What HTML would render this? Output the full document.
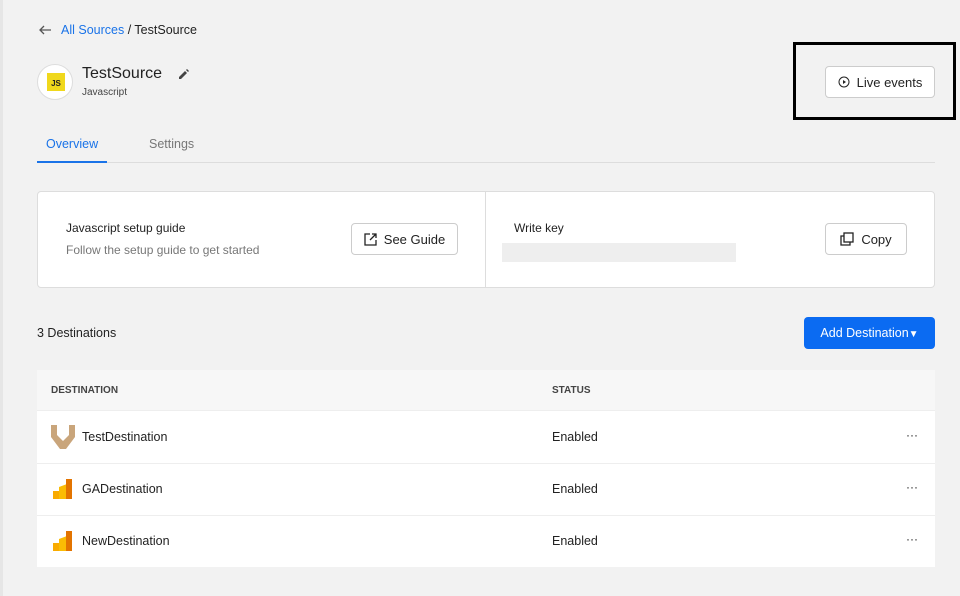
<!DOCTYPE html>
<html><head><style>
*{box-sizing:border-box;margin:0;padding:0}
body{width:960px;height:596px;background:#f2f2f2;font-family:"Liberation Sans",sans-serif;color:#222;position:relative;overflow:hidden;font-size:13px}
.a{position:absolute}
.btn{position:absolute;background:#fff;border:1px solid #ccc;border-radius:4px;display:flex;align-items:center;justify-content:center;gap:7px;font-size:13px;color:#222}
</style></head><body>
<div class="a" style="left:0;top:0;width:3px;height:596px;background:#e6e6e6"></div>
<svg class="a" style="left:39px;top:25px" width="13" height="10" viewBox="0 0 13 10"><path d="M12 5H2M5 1L1 5l4 4" fill="none" stroke="#555" stroke-width="1.3"/></svg>
<div class="a" style="left:61px;top:23px;font-size:12.5px"><span style="color:#1a73e8">All Sources</span> / TestSource</div>
<div class="a" style="left:37px;top:64px;width:36px;height:36px;border-radius:50%;background:#fff;border:1px solid #ddd"></div>
<div class="a" style="left:47px;top:73px;width:18px;height:18px;background:#f0d81c;font-size:8px;font-weight:bold;text-align:center;line-height:22px">JS</div>
<div class="a" style="left:82px;top:65px;font-size:16px">TestSource</div>
<svg class="a" style="left:179px;top:69px" width="10" height="10" viewBox="0 0 10 10"><path d="M0 10V8l6-6 2 2-6 6zM7 1l1-1 2 2-1 1z" fill="#444"/></svg>
<div class="a" style="left:82px;top:87px;font-size:10px;color:#444">Javascript</div>
<div class="a" style="left:793px;top:42px;width:163px;height:78px;border:3px solid #000"></div>
<div class="btn" style="left:825px;top:66px;width:110px;height:32px"><svg width="12" height="12" viewBox="0 0 12 12"><circle cx="6" cy="6" r="5" fill="none" stroke="#222"/><path d="M5 4l3 2-3 2z" fill="#222"/></svg>Live events</div>
<div class="a" style="left:46px;top:137px;font-size:12.5px;color:#1a73e8">Overview</div>
<div class="a" style="left:149px;top:137px;font-size:12.5px;color:#777">Settings</div>
<div class="a" style="left:37px;top:162px;width:898px;height:1px;background:#ddd"></div>
<div class="a" style="left:37px;top:161px;width:70px;height:2px;background:#1a73e8"></div>
<div class="a" style="left:37px;top:191px;width:898px;height:97px;background:#fff;border:1px solid #ddd;border-radius:4px"></div>
<div class="a" style="left:485px;top:192px;width:1px;height:95px;background:#ddd"></div>
<div class="a" style="left:66px;top:221px;font-size:12px">Javascript setup guide</div>
<div class="a" style="left:66px;top:243px;font-size:12px;color:#777">Follow the setup guide to get started</div>
<div class="btn" style="left:351px;top:223px;width:107px;height:32px"><svg width="13" height="13" viewBox="0 0 13 13"><path d="M6 1H1v11h11V7M8 1h4v4M12 1L6 7" fill="none" stroke="#222" stroke-width="1.3"/></svg>See Guide</div>
<div class="a" style="left:514px;top:221px;font-size:12px">Write key</div>
<div class="a" style="left:502px;top:243px;width:234px;height:19px;background:#eee"></div>
<div class="btn" style="left:825px;top:223px;width:82px;height:32px"><svg width="14" height="14" viewBox="0 0 14 14"><rect x="4" y="1" width="9" height="9" fill="none" stroke="#222" stroke-width="1.3"/><path d="M4 4H1v9h9v-3" fill="none" stroke="#222" stroke-width="1.3"/></svg>Copy</div>
<div class="a" style="left:37px;top:326px;font-size:12.5px">3 Destinations</div>
<div class="a" style="left:804px;top:317px;width:131px;height:32px;background:#0b6bf2;border-radius:4px;color:#fff;font-size:12.5px;text-align:center;line-height:32px">Add Destination<span style="font-size:10px">&#9660;</span></div>
<div class="a" style="left:37px;top:370px;width:898px;height:197px;background:#fff"></div>
<div class="a" style="left:37px;top:370px;width:898px;height:41px;background:#f7f7f7;border-bottom:1px solid #eee"></div>
<div class="a" style="left:51px;top:385px;font-size:10px;font-weight:bold;color:#444">DESTINATION</div>
<div class="a" style="left:552px;top:385px;font-size:10px;font-weight:bold;color:#444">STATUS</div>
<div class="a" style="left:37px;top:463px;width:898px;height:1px;background:#eee"></div>
<div class="a" style="left:37px;top:515px;width:898px;height:1px;background:#eee"></div>
<svg class="a" style="left:51px;top:425px" width="24" height="24" viewBox="0 0 24 24"><path d="M0 0h6v10l6 6 6-6V0h6v12l-9 12h-6L0 12z" fill="#c9a57b"/></svg>
<svg class="a" style="left:53px;top:479px" width="20" height="20"><path d="M0 12h8v8H0z" fill="#f9ab00"/><path d="M6 8l8-3v15H6z" fill="#fbbc04"/><path d="M13 0h6v20h-6z" fill="#e37400"/></svg>
<svg class="a" style="left:53px;top:531px" width="20" height="20"><path d="M0 12h8v8H0z" fill="#f9ab00"/><path d="M6 8l8-3v15H6z" fill="#fbbc04"/><path d="M13 0h6v20h-6z" fill="#e37400"/></svg>
<div class="a" style="left:82px;top:430px;font-size:12.5px">TestDestination</div>
<div class="a" style="left:82px;top:482px;font-size:12.5px">GADestination</div>
<div class="a" style="left:82px;top:534px;font-size:12.5px">NewDestination</div>
<div class="a" style="left:552px;top:430px;font-size:12.5px">Enabled</div>
<div class="a" style="left:552px;top:482px;font-size:12.5px">Enabled</div>
<div class="a" style="left:552px;top:534px;font-size:12.5px">Enabled</div>
<div class="a" style="left:906px;top:428px;font-size:12px">···</div>
<div class="a" style="left:906px;top:480px;font-size:12px">···</div>
<div class="a" style="left:906px;top:532px;font-size:12px">···</div>
</body></html>
